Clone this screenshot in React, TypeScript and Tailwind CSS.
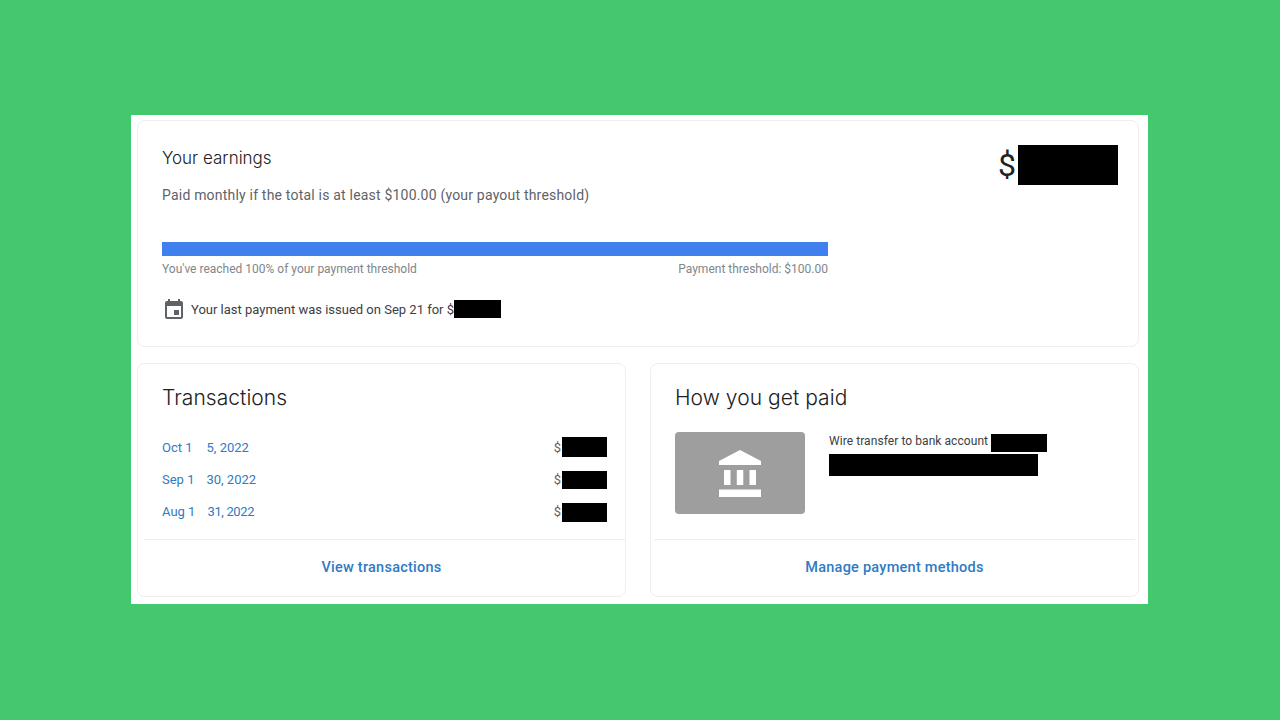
import React from "react";

const Black = ({ className }: { className: string }) => <div className={`bg-black shrink-0 ${className}`} />;

const rows = [
  { a: "Oct 1", b: "5, 2022", gap: "w-[14px]", block: "h-5 mb-[2px]", bc: "" },
  { a: "Sep 1", b: "30, 2022", gap: "w-[12px]", block: "h-[18px]", bc: "" },
  { a: "Aug 1", b: "31, 2022", gap: "w-[12px]", block: "h-[19px]", bc: "tracking-[-0.35px]" },
];

export default function App() {
  return (
    <div className="w-[1280px] h-[720px] bg-[#43c86f] pt-[115px] pl-[131px] overflow-hidden font-['Roboto',sans-serif]">
      <div className="w-[1017px] h-[489px] bg-white pl-[6px] pt-[5px]">
        <div className="w-[1002px] h-[227px] border border-[#eceef0] rounded-[8px] pl-[24px] pr-5 flex flex-col">
          <div className="flex justify-between h-[121px]">
            <div className="flex flex-col">
              <div className="mt-[25px] text-[17px] leading-6 font-light text-[#202124] font-['Inter',sans-serif]">Your earnings</div>
              <div className="mt-[15px] text-[14px] leading-5 tracking-[0.2px] text-[#5f6368]">Paid monthly if the total is at least $100.00 (your payout threshold)</div>
            </div>
            <div className="flex items-center mt-[24px] h-10">
              <span className="text-[32px] leading-10 text-[#202124] mr-[2px]">$</span>
              <Black className="w-[100px] h-10" />
            </div>
          </div>
          <div className="w-[666px] h-[14px] bg-[#4080ee]" />
          <div className="w-[666px] mt-[5px] flex justify-between text-[12px] leading-4 text-[#80868b]">
            <span>You've reached 100% of your payment threshold</span>
            <span>Payment threshold: $100.00</span>
          </div>
          <div className="flex items-center mt-[21px] h-6">
            <svg width="24" height="24" viewBox="0 0 24 24" fill="#5f6368" className="shrink-0">
              <path d="M17 12h-5v5h5v-5zM16 1v2H8V1H6v2H5c-1.11 0-1.99.9-1.99 2L3 19c0 1.1.89 2 2 2h14c1.1 0 2-.9 2-2V5c0-1.1-.9-2-2-2h-1V1h-2zm3 18H5V8h14v11z" />
            </svg>
            <span className="ml-[5px] text-[13px] leading-5 text-[#3c4043]">Your last payment was issued on Sep 21 for $</span>
            <Black className="w-[47px] h-[18px] mb-[2px]" />
          </div>
        </div>

        <div className="flex gap-6 mt-4">
          <div className="w-[489px] h-[234px] border border-[#eceef0] rounded-[8px] flex flex-col">
            <div className="h-[175px] pl-[24px] pr-[18px]">
              <div className="mt-[20px] text-[21px] leading-7 tracking-[0.05px] font-light text-[#202124] font-['Inter',sans-serif]">Transactions</div>
              <div className="mt-[20px] flex flex-col">
                {rows.map((r) => (
                  <div key={r.a} className="h-8 flex items-center justify-between">
                    <div className="flex text-[13px] leading-5 text-[#2f7bc4]">
                      <span>{r.a}</span>
                      <span className={r.gap} />
                      <span className={r.bc}>{r.b}</span>
                    </div>
                    <div className="flex items-center">
                      <span className="text-[13px] text-[#5f6368] mr-[1px]">$</span>
                      <Black className={`w-[45px] ${r.block}`} />
                    </div>
                  </div>
                ))}
              </div>
            </div>
            <div className="ml-[6px] border-t border-[#eceef0]" />
            <div className="flex-1 flex items-center justify-center text-[14.5px] font-medium tracking-[0.25px] text-[#2f7bc4]">View transactions</div>
          </div>

          <div className="w-[489px] h-[234px] border border-[#eceef0] rounded-[8px] flex flex-col">
            <div className="h-[175px] pl-[24px]">
              <div className="mt-[20px] text-[21px] leading-7 tracking-[0.05px] font-light text-[#202124] font-['Inter',sans-serif]">How you get paid</div>
              <div className="mt-[20px] flex">
                <div className="w-[130px] h-[82px] rounded-[4px] bg-[#9e9e9e] flex items-center justify-center">
                  <svg width="42" height="47" viewBox="0 0 42 47" fill="#ffffff">
                    <path d="M21 0L42 11V15H0V11Z" />
                    <rect x="5" y="20" width="6.5" height="15" />
                    <rect x="17.8" y="20" width="6.5" height="15" />
                    <rect x="30.5" y="20" width="6.5" height="15" />
                    <rect x="0" y="39.5" width="42" height="7.5" />
                  </svg>
                </div>
                <div className="ml-6 flex flex-col">
                  <div className="flex items-start mt-[2px]">
                    <span className="text-[12px] leading-[14px] tracking-[0.07px] text-[#3c4043]">Wire transfer to bank account</span>
                    <Black className="w-[56px] h-[18px] ml-[3px]" />
                  </div>
                  <Black className="w-[209px] h-[22px] mt-[2px]" />
                </div>
              </div>
            </div>
            <div className="mx-[3px] border-t border-[#eceef0]" />
            <div className="flex-1 flex items-center justify-center text-[14.5px] font-medium tracking-[0.25px] text-[#2f7bc4]">Manage payment methods</div>
          </div>
        </div>
      </div>
    </div>
  );
}
